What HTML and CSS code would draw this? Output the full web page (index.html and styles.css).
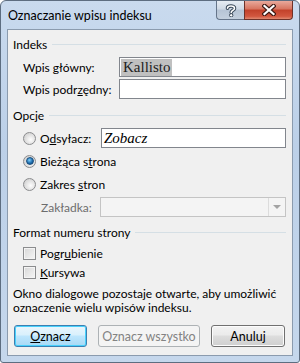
FILE: index.html
```html
<!DOCTYPE html>
<html lang="pl">
<head>
  <meta charset="UTF-8" />
  <meta name="viewport" content="width=device-width, initial-scale=1" />
  <title>Oznaczanie wpisu indeksu</title>
  <link rel="stylesheet" href="styles.css">
</head>
<body>

<div class="window">
  <div class="titlebar">
    <span class="title">Oznaczanie wpisu indeksu</span>
    <div class="caption-btns">
      <div class="cap-help">
        <svg width="12" height="13" viewBox="0 0 12 13">
          <path d="M2.5 4.2 C2.5 1.4 9.5 1.2 9.5 4.2 C9.5 6.3 6.2 6.3 6.2 8.4" fill="none" stroke="#364657" stroke-width="3.6" stroke-linecap="round"/>
          <path d="M2.5 4.2 C2.5 1.4 9.5 1.2 9.5 4.2 C9.5 6.3 6.2 6.3 6.2 8.4" fill="none" stroke="#fff" stroke-width="1.6" stroke-linecap="round"/>
          <circle cx="6.2" cy="11.3" r="1.7" fill="#fff" stroke="#364657" stroke-width="1"/>
        </svg>
      </div>
      <div class="cap-close">
        <svg width="14" height="12" viewBox="0 0 14 12">
          <path d="M2.5 2 L11.5 10 M11.5 2 L2.5 10" stroke="#3b1812" stroke-width="4.4" stroke-linecap="square"/>
          <path d="M2.5 2 L11.5 10 M11.5 2 L2.5 10" stroke="#fff" stroke-width="2.2" stroke-linecap="square"/>
        </svg>
      </div>
    </div>
  </div>

  <div class="client">
    <div class="group-head"><span>Indeks</span></div>
    <div class="field-row first">
      <label class="lbl">Wpis <u>g</u>łówny:</label>
      <div class="textbox serif"><span class="sel">Kallisto</span></div>
    </div>
    <div class="field-row second">
      <label class="lbl">Wpis podr<u>z</u>ędny:</label>
      <div class="textbox"></div>
    </div>

    <div class="group-head opcje"><span>Opcje</span></div>
    <div class="field-row odsylacz">
      <span class="radio"></span>
      <label class="opt-lbl">O<u>d</u>syłacz:</label>
      <div class="textbox serif italic wide">Zobacz</div>
    </div>
    <div class="opt-row biez">
      <span class="radio checked"></span>
      <label class="opt-lbl">Bieżąca s<u>t</u>rona</label>
    </div>
    <div class="opt-row zakres">
      <span class="radio"></span>
      <label class="opt-lbl"><span>Zakres </span><u>s</u>tron</label>
    </div>
    <div class="field-row zakladka">
      <label class="lbl disabled">Zakładka:</label>
      <div class="combo">
        <div class="combo-arrow"></div>
      </div>
    </div>

    <div class="group-head format"><span>Format numeru strony</span></div>
    <div class="opt-row pogr">
      <span class="check"></span>
      <label class="opt-lbl">Pogr<u>u</u>bienie</label>
    </div>
    <div class="opt-row kurs">
      <span class="check"></span>
      <label class="opt-lbl"><u>K</u>ursywa</label>
    </div>

    <p class="note">Okno dialogowe pozostaje otwarte, aby umożliwić<br>oznaczenie wielu wpisów indeksu.</p>

    <div class="buttons">
      <button class="btn default"><u>O</u>znacz</button>
      <button class="btn wide-btn" disabled>Oznacz wszystko</button>
      <button class="btn">Anuluj</button>
    </div>
  </div>
</div>

</body>
</html>
```

FILE: styles.css
```css
html, body {
  margin: 0;
  padding: 0;
  background: #fff;
}
body {
  font-family: Lato, "Noto Sans", sans-serif;
  font-size: 12px;
  color: #000;
}
.window {
  width: 298px;
  height: 361px;
  border: 1px solid #5d6d80;
  border-radius: 6px 6px 3px 3px;
  background: linear-gradient(#c9daee, #bcd0e8 40%, #c5d7ec);
  display: flex;
  flex-direction: column;
}
.titlebar {
  height: 28px;
  display: flex;
  justify-content: space-between;
  align-items: flex-start;
}
.title {
  margin: 7px 0 0 7px;
  line-height: 16px;
  font-size: 12.5px;
}
.caption-btns {
  display: flex;
  margin-right: 6px;
}
.cap-help, .cap-close {
  height: 18px;
  display: flex;
  align-items: center;
  justify-content: center;
  border: 1px solid #65758a;
  border-top: none;
}
.cap-help {
  width: 27px;
  border-radius: 0 0 0 4px;
  border-right: none;
  background: linear-gradient(#e6ecf3, #cfd9e5 45%, #b6c4d5 50%, #c3d0de);
}
.cap-close {
  width: 47px;
  border-radius: 0 0 4px 0;
  border-color: #6e3229;
  background: linear-gradient(#e9a99c, #d7745f 45%, #c2412a 50%, #d2573f 85%, #e08a72);
}
.client {
  flex: 1;
  margin: 0 6px 6px 6px;
  border: 1px solid #8b9bae;
  background: #f0f0f0;
  padding: 0 6px 0 5px;
  display: flex;
  flex-direction: column;
}
.group-head {
  height: 14px;
  display: flex;
  align-items: center;
  margin-top: 7px;
}
.group-head::after {
  content: "";
  flex: 1;
  height: 1px;
  background: #d5dfe5;
  margin-left: 5px;
}
.group-head.opcje { margin-top: 9px; }
.group-head.format { margin-top: 8px; }
.field-row {
  display: flex;
  align-items: center;
  height: 20px;
  padding-left: 10px;
}
.field-row.first { margin-top: 6px; }
.field-row.second { margin-top: 2px; }
.field-row.odsylacz { margin-top: 6px; }
.field-row.zakladka { margin-top: 4px; }
.lbl {
  width: 96px;
  flex: none;
  white-space: nowrap;
}
.lbl.disabled {
  color: #6d6d6d;
  width: 59px;
  padding-left: 18px;
}
.textbox {
  flex: 1;
  height: 18px;
  border: 1px solid #82868d;
  background: #fff;
  display: flex;
  align-items: center;
  padding-left: 1px;
}
.serif {
  font-family: "Liberation Serif", serif;
  font-size: 15px;
}
.italic {
  font-style: italic;
  padding-left: 2px;
}
.textbox.wide {
  margin-left: 5px;
}
.sel {
  background: #c0c0c0;
  height: 17px;
  line-height: 17px;
  padding: 0 1px 0 2px;
  color: #222;
}
.opt-row {
  display: flex;
  align-items: center;
  height: 18px;
  padding-left: 10px;
}
.opt-row.biez { margin-top: 4px; }
.opt-row.zakres { margin-top: 5px; }
.opt-row.pogr { margin-top: 5px; }
.opt-row.kurs { margin-top: 1px; }
.opt-lbl {
  margin-left: 4px;
  white-space: nowrap;
}
.odsylacz .opt-lbl { width: 56px; }
.radio {
  width: 11px;
  height: 11px;
  border-radius: 50%;
  border: 1px solid #8b8c8e;
  background: radial-gradient(circle at 60% 60%, #fdfdfd, #dcdcdc 60%, #c8c8c8);
  flex: none;
  display: flex;
  align-items: center;
  justify-content: center;
}
.radio.checked::after {
  content: "";
  width: 6px;
  height: 6px;
  border-radius: 50%;
  background: radial-gradient(circle at 40% 35%, #7fd0fa, #1f6fb1 55%, #0d3f6e);
  border: 1px solid #1b4f7e;
}
.check {
  width: 11px;
  height: 11px;
  border: 1px solid #8b8c8e;
  background: linear-gradient(135deg, #d7d7d7, #f6f6f6);
  box-shadow: inset 0 0 0 1px #f4f4f4;
  flex: none;
}
.combo {
  flex: 1;
  height: 18px;
  border: 1px solid #c4c4c4;
  background: #f4f4f4;
  display: flex;
  justify-content: flex-end;
}
.combo-arrow {
  width: 16px;
  border-left: 1px solid #dcdcdc;
  display: flex;
  align-items: center;
  justify-content: center;
}
.combo-arrow::after {
  content: "";
  border-left: 4px solid transparent;
  border-right: 4px solid transparent;
  border-top: 4px solid #a3a3a3;
}
.note {
  margin: 6px 0 0 0;
  line-height: 14px;
  white-space: nowrap;
}
.buttons {
  display: flex;
  gap: 11px;
  margin-top: 10px;
  margin-left: 1px;
}
.btn {
  font-family: inherit;
  font-size: 12.5px;
  height: 22px;
  padding: 0;
  border: 1px solid #707070;
  border-radius: 3px;
  background: linear-gradient(#f2f2f2, #ebebeb 45%, #dddddd 50%, #cfcfcf);
  box-shadow: inset 0 0 0 1px #fcfcfc;
  color: #000;
  width: 74px;
}
.btn.default {
  width: 73px;
  border-color: #3c7fb1;
  box-shadow: inset 0 0 0 1px #48d1fc;
  background: linear-gradient(#eaf6fd, #d9f0fc 45%, #bee6fd 50%, #a7d9f5);
}
.btn.wide-btn {
  width: 102px;
}
.btn:disabled {
  border-color: #adb2b5;
  background: #f4f4f4;
  box-shadow: none;
  color: #838383;
}
```
